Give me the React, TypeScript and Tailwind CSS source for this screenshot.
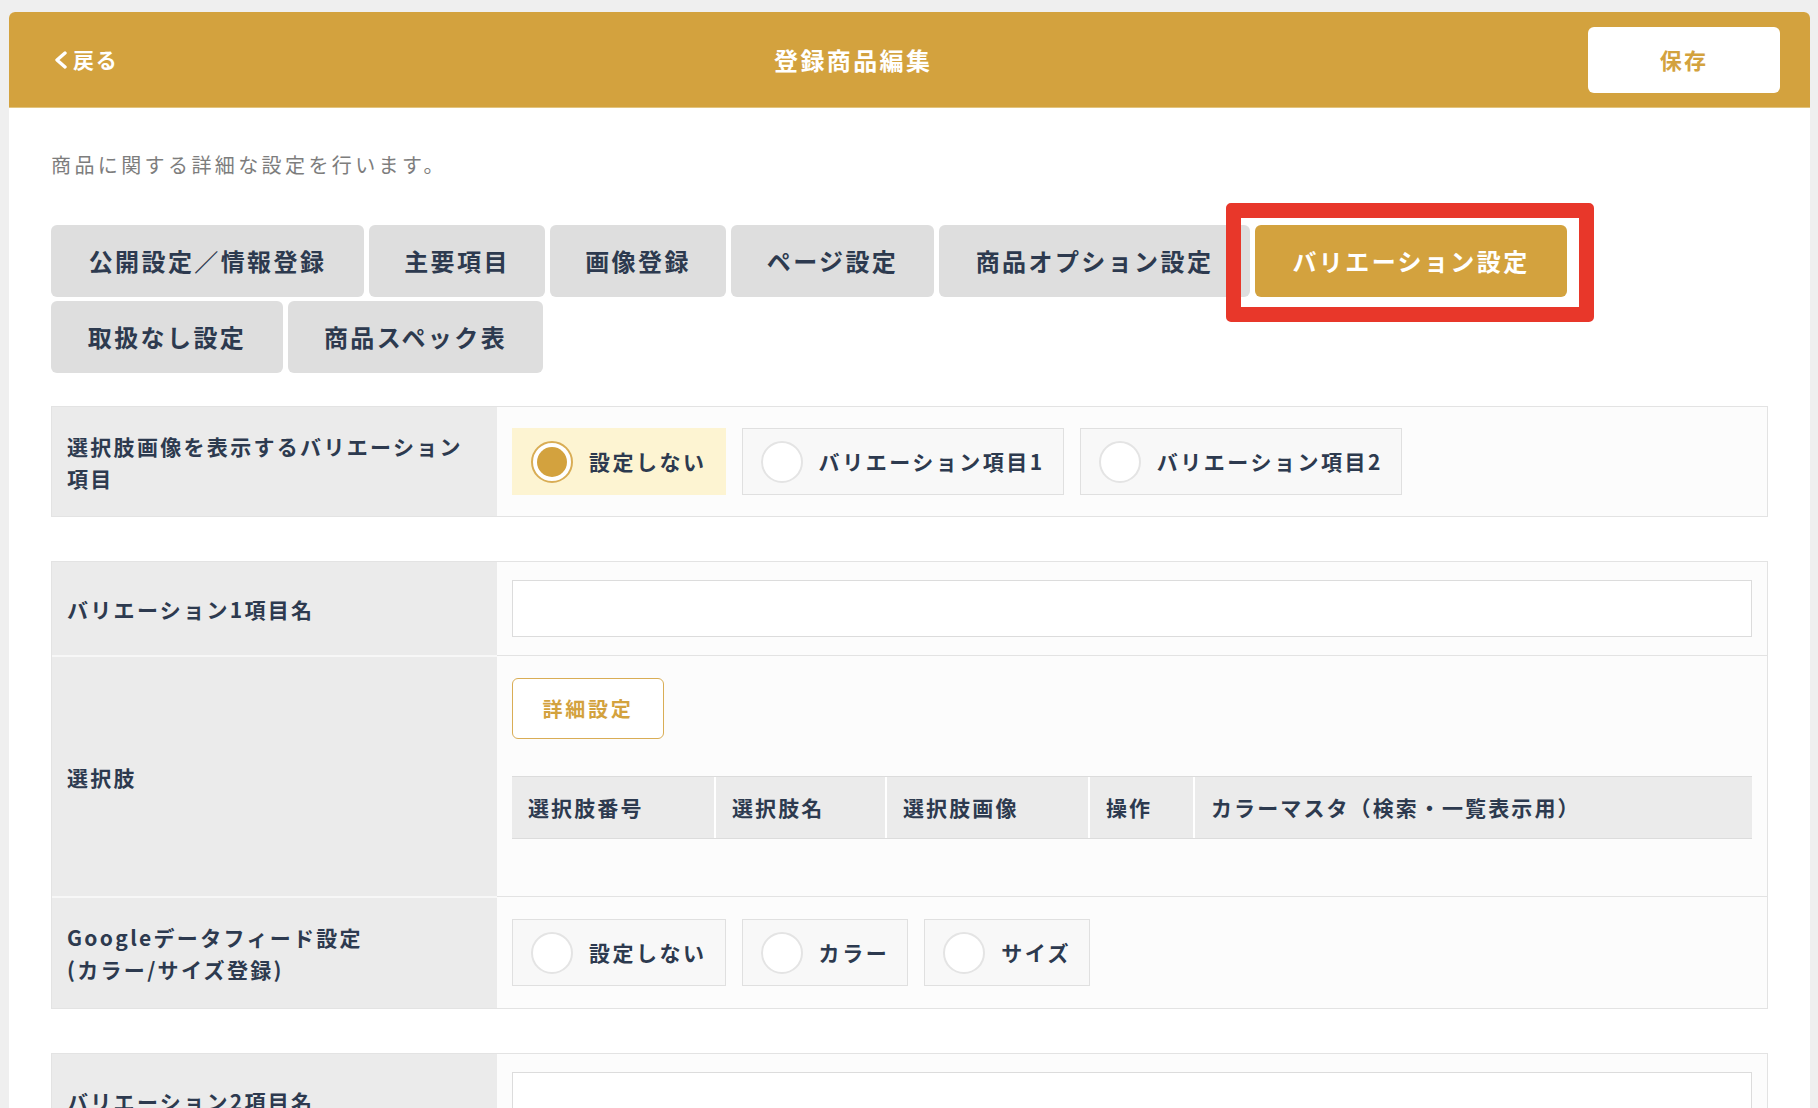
export default function App() {
  const tabs = [
    { label: "公開設定／情報登録", w: "w-[313px]" },
    { label: "主要項目", w: "w-[176px]" },
    { label: "画像登録", w: "w-[176px]" },
    { label: "ページ設定", w: "w-[203px]" },
    { label: "商品オプション設定", w: "w-[311px]" },
    { label: "バリエーション設定", w: "w-[312px]", active: true },
    { label: "取扱なし設定", w: "w-[232px]" },
    { label: "商品スペック表", w: "w-[255px]" },
  ];

  const cols = ["選択肢番号", "選択肢名", "選択肢画像", "操作", "カラーマスタ（検索・一覧表示用）"];

  return (
    <div className="h-screen overflow-hidden bg-[#efefef] pt-[12px] pl-[9px] pr-[8px] font-['Noto_Sans_CJK_JP','Noto_Sans',sans-serif] text-[#2d3a4f]">
      <div className="min-h-[1100px] rounded-t-[6px] bg-white">
        {/* ヘッダー */}
        <div className="flex h-[96px] items-center justify-between rounded-t-[6px] border-b border-[#e2c47e] bg-[#d3a23e] pl-[43px] pr-[30px]">
          <a className="flex items-center gap-[3px] text-[21px] font-bold tracking-[0.08em] text-white">
            <svg width="18" height="18" viewBox="0 0 18 18" fill="none">
              <path d="M13 2 L5 9 L13 16" stroke="white" strokeWidth="3.4" strokeLinecap="round" strokeLinejoin="round" />
            </svg>
            戻る
          </a>
          <h1 className="text-[24px] font-bold tracking-[0.1em] text-white">登録商品編集</h1>
          <button className="flex h-[66px] w-[192px] items-center justify-center rounded-[6px] bg-white text-[22px] font-bold tracking-[0.1em] text-[#d3a23e]">
            保存
          </button>
        </div>

        <div className="px-[42px] pt-[42px]">
          <p className="text-[20px] leading-[30px] tracking-[0.17em] text-[#7d7d7d]">
            商品に関する詳細な設定を行います。
          </p>

          {/* タブ */}
          <div className="mt-[45px] flex flex-wrap gap-x-[5px] gap-y-[4px]">
            {tabs.map((t) => (
              <div key={t.label} className="relative">
                <button
                  className={`flex h-[72px] ${t.w} items-center justify-center rounded-[6px] text-[24px] font-bold tracking-[0.1em] ${
                    t.active ? "bg-[#d3a23e] text-white" : "bg-[#dedede] text-[#2d3a4f]"
                  }`}
                >
                  {t.label}
                </button>
                {t.active && (
                  <span className="pointer-events-none absolute -top-[22px] -bottom-[25px] -left-[29px] -right-[27px] rounded-[5px] border-[15px] border-[#e8372a]" />
                )}
              </div>
            ))}
          </div>

          {/* 選択肢画像 */}
          <div className="mt-[33px] flex border border-[#e3e3e3]">
            <div className="flex w-[445px] items-center bg-[#ebebeb] px-[15px] text-[21px] font-bold leading-[32px] tracking-[0.11em]">
              <div>
                選択肢画像を表示するバリエーション
                <br />
                項目
              </div>
            </div>
            <div className="flex flex-1 gap-4 bg-[#fcfcfc] px-[15px] py-[21px]">
              <Radio label="設定しない" checked />
              <Radio label="バリエーション項目1" />
              <Radio label="バリエーション項目2" />
            </div>
          </div>

          {/* バリエーション1 */}
          <div className="mt-[44px] border border-[#e3e3e3]">
            <div className="flex">
              <Label>バリエーション1項目名</Label>
              <div className="flex-1 bg-[#fcfcfc] px-[15px] py-[18px]">
                <div className="h-[57px] border border-[#dcdcdc] bg-white" />
              </div>
            </div>
            <div className="flex">
              <Label top>選択肢</Label>
              <div className="flex-1 border-t border-[#e3e3e3] bg-[#fcfcfc] px-[15px] pt-[22px] pb-[57px]">
                <button className="flex h-[61px] w-[152px] items-center justify-center rounded-[6px] border-[1.5px] border-[#d9ad55] bg-white text-[20px] font-bold tracking-[0.14em] text-[#d3a23e]">
                  詳細設定
                </button>
                <div className="mt-[37px] grid h-[63px] grid-cols-[202px_171px_203px_105px_1fr] border-y border-[#dcdcdc] bg-[#ebebeb]">
                  {cols.map((c, i) => (
                    <div
                      key={c}
                      className={`flex items-center pl-[16px] text-[21px] font-bold tracking-[0.1em] ${i > 0 ? "border-l-2 border-white" : ""}`}
                    >
                      {c}
                    </div>
                  ))}
                </div>
              </div>
            </div>
            <div className="flex">
              <Label top>
                Googleデータフィード設定
                <br />
                (カラー/サイズ登録)
              </Label>
              <div className="flex flex-1 gap-4 border-t border-[#e3e3e3] bg-[#fcfcfc] px-[15px] py-[22px]">
                <Radio label="設定しない" />
                <Radio label="カラー" />
                <Radio label="サイズ" />
              </div>
            </div>
          </div>

          {/* バリエーション2 */}
          <div className="mt-[44px] border border-[#e3e3e3]">
            <div className="flex">
              <Label>バリエーション2項目名</Label>
              <div className="flex-1 bg-[#fcfcfc] px-[15px] py-[18px]">
                <div className="h-[57px] border border-[#dcdcdc] bg-white" />
              </div>
            </div>
          </div>
        </div>
      </div>
    </div>
  );
}

function Label({ children, top }: { children: React.ReactNode; top?: boolean }) {
  return (
    <div
      className={`flex w-[445px] shrink-0 items-center bg-[#ebebeb] px-[15px] text-[21px] font-bold leading-[32px] tracking-[0.11em] ${
        top ? "border-t-2 border-[#f7f7f7]" : ""
      }`}
    >
      <div>{children}</div>
    </div>
  );
}

function Radio({ label, checked }: { label: string; checked?: boolean }) {
  return (
    <label
      className={`flex h-[67px] items-center gap-[16px] border pl-[18px] pr-[18px] text-[21px] font-bold tracking-[0.12em] ${
        checked ? "border-[#fdf4d2] bg-[#fdf4d2]" : "border-[#e0e0e0] bg-[#f8f8f8]"
      }`}
    >
      <span
        className={`flex h-[42px] w-[42px] shrink-0 items-center justify-center rounded-full border-2 bg-white ${
          checked ? "border-[#d9ad55]" : "border-[#e4e4e4]"
        }`}
      >
        {checked && <span className="h-[30px] w-[30px] rounded-full bg-[#d3a23e]" />}
      </span>
      {label}
    </label>
  );
}
